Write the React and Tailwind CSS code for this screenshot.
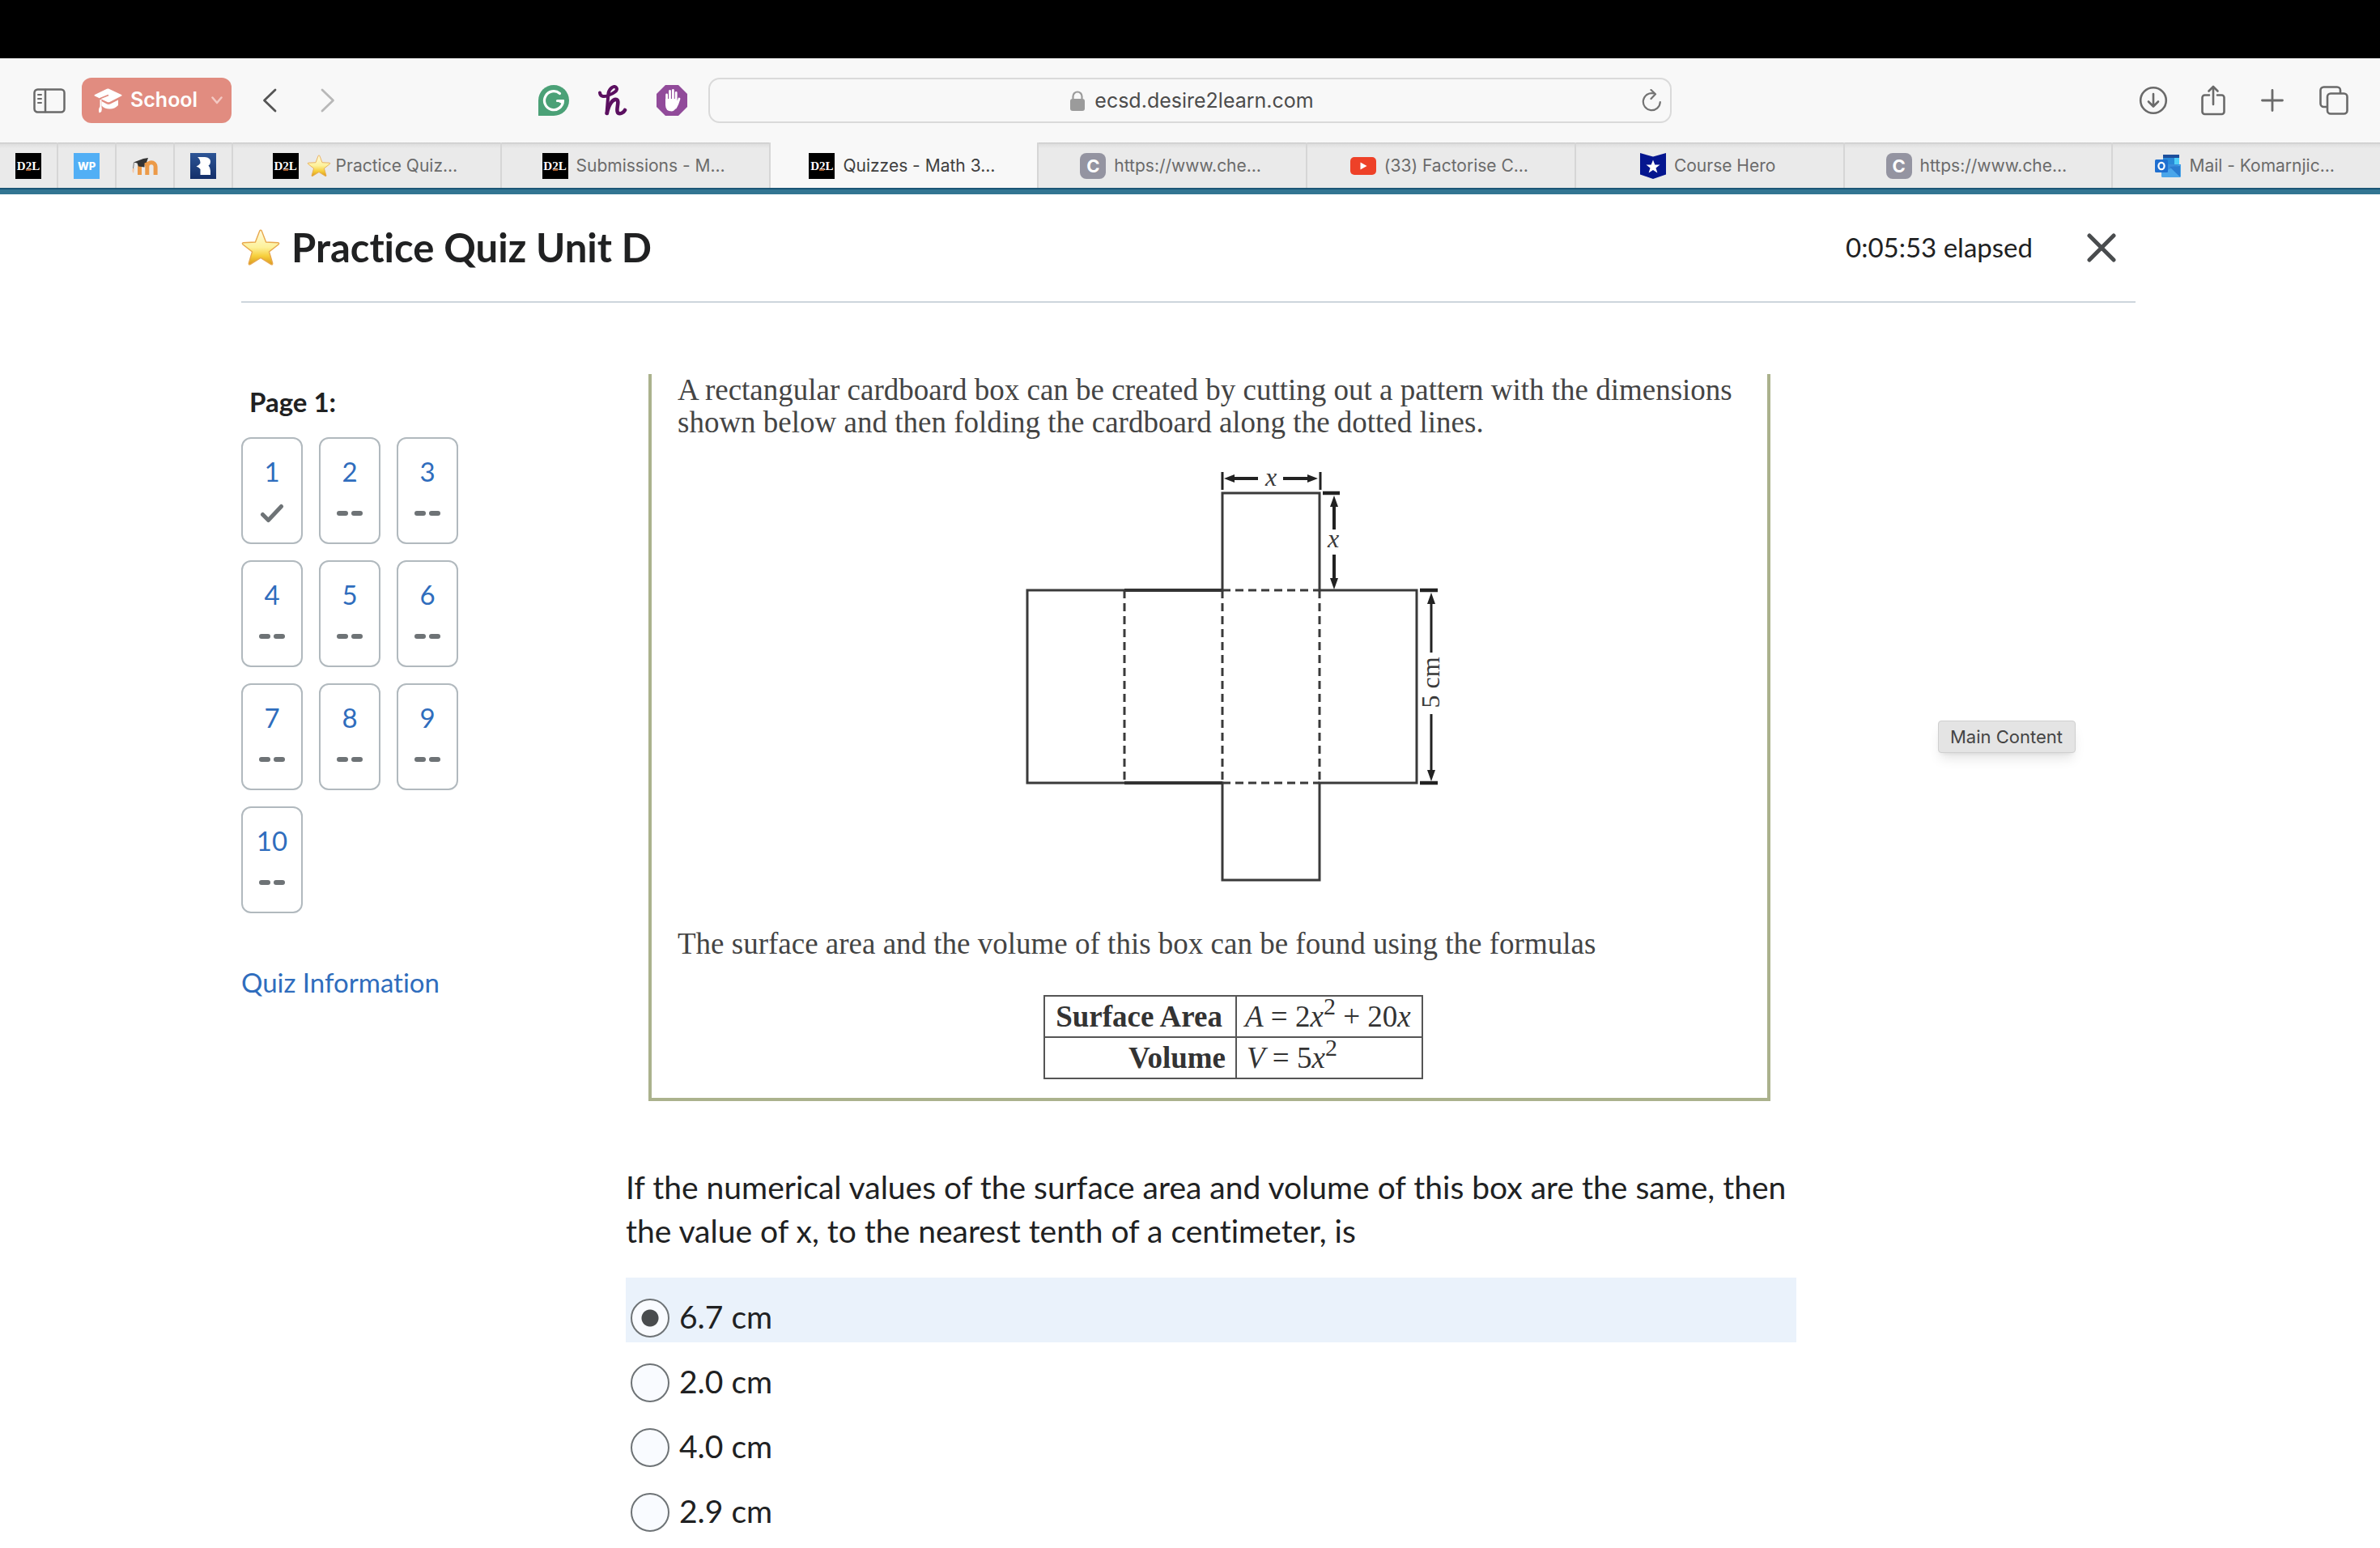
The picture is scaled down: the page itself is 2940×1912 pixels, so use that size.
import React, { useState } from "react";

/* ---------- icons ---------- */

function Star({ className }) {
  return (
    <svg viewBox="0 0 48 46" className={className} aria-hidden="true">
      <defs>
        <linearGradient id="starFill" x1="0" y1="0" x2="0" y2="1">
          <stop offset="0" stopColor="#fffbe0" />
          <stop offset="0.5" stopColor="#fdf19a" />
          <stop offset="0.75" stopColor="#f7cf3c" />
          <stop offset="1" stopColor="#d99a1c" />
        </linearGradient>
      </defs>
      <path
        d="M22.7 2.2q1.3-2 2.6 0L30.6 16l14.8.7q2 .3.8 2L34.500 28l4.200 14.200q.3 2.300-1.800 1.400L24 35.500 11.100 43.600q-2.100.9-1.800-1.400L13.500 28 1.800 18.700q-1.200-1.700.8-2L17.400 16Z"
        fill="url(#starFill)"
        stroke="#e8a84c"
        strokeWidth="1.4"
      />
    </svg>
  );
}

function SidebarIcon() {
  return (
    <svg viewBox="0 0 40 31" className="h-[31px] w-10" fill="none" stroke="#6a6a6a" strokeWidth="2.500" strokeLinecap="round">
      <rect x="1.500" y="1.500" width="37" height="28" rx="4" />
      <path d="M15 2v27" />
      <path d="M6 8h4M6 13h4M6 18h4" strokeWidth="2" />
    </svg>
  );
}

function CapIcon() {
  return (
    <svg viewBox="0 0 35 31" className="h-[31px] w-[35px]" aria-hidden="true">
      <path d="M18 0.500 34 8q1.200.8 0 1.600L19.500 17q-1.500.6-3 0L1 9.600Q0 8.800 1 8L16 .8q1-.5 2-.3Z" fill="#fff" />
      <path d="M9.500 16 16 19.500q2 .8 4 0L30 14.500V21q-5 5-11 4.500-6 0-9.500-4Z" fill="#fff" />
      <path d="M18 8.500 8 12.500V22" fill="none" stroke="#e18c80" strokeWidth="1.800" />
      <path d="M7.500 14v8.500q-2.500 4-.8 8l2.500-1.500q1-3.500.2-6.500V14Z" fill="#fff" />
    </svg>
  );
}

function GrammarlyIcon() {
  return (
    <svg viewBox="0 0 38 38" className="size-[38px]">
      <path d="M19 0a19 19 0 1 1 0 38H0V19A19 19 0 0 1 19 0Z" fill="#4ba177" />
      <path d="M26.500 10.500A11.500 11.500 0 1 0 30.500 19.500H23.500" fill="none" stroke="#fff" strokeWidth="3.200" strokeLinecap="round" strokeLinejoin="round" />
      <path d="M22 19.500l4-1.500h6l-3 5Z" fill="#fff" />
    </svg>
  );
}

function HoneyIcon() {
  return (
    <svg viewBox="0 0 36 38" className="h-[38px] w-9" fill="none" stroke="#5b1060" strokeLinecap="round" strokeLinejoin="round">
      <path d="M2 9.500C2.500 14.500 7 15 12 13 20 10 24.500 6.500 22.500 3.500 20 0 14 3.500 12.500 10L10.500 35" strokeWidth="4" />
      <path d="M10.800 35C13 24 18 17 22.500 18c4.500 1.500-1 12 1.500 16 2.500 3 7.500 0 9-3" strokeWidth="4.600" />
    </svg>
  );
}

function HandIcon() {
  return (
    <svg viewBox="0 0 38 38" className="size-[38px]">
      <path d="M11 0h16l11 11v16L27 38H11L0 27V11Z" fill="#914b9a" />
      <path d="M11 17h13.800v9q-2 6-6 6.500-7.800 0-7.800-8Z" fill="#fff" />
      <path
        d="M12.600 24V12M16.500 20V7.500M20.400 20V6.500M24.200 22V9.500M23.500 28Q26 24 28 17"
        fill="none"
        stroke="#fff"
        strokeWidth="2.800"
        strokeLinecap="round"
      />
    </svg>
  );
}

function LockIcon() {
  return (
    <svg viewBox="0 0 18 25" className="h-[25px] w-[18px]">
      <rect x="0" y="10" width="18" height="15" rx="3" fill="#9b9b9b" />
      <path d="M3.500 11V7a5.500 5.500 0 0 1 11 0v4" fill="none" stroke="#9b9b9b" strokeWidth="2.200" />
    </svg>
  );
}

function ReloadIcon() {
  return (
    <svg viewBox="0 0 25 28" className="h-7 w-[25px]" fill="none" stroke="#737373" strokeWidth="2.200" strokeLinecap="round" strokeLinejoin="round">
      <path d="M15 5.500A10.500 10.500 0 1 0 22.800 16" />
      <path d="M11.500 1 17 6.200 11.500 12" />
    </svg>
  );
}

function DownloadIcon() {
  return (
    <svg viewBox="0 0 36 36" className="size-9" fill="none" stroke="#6a6a6a" strokeWidth="2.600" strokeLinecap="round" strokeLinejoin="round">
      <circle cx="18" cy="18" r="15.800" />
      <path d="M18 10v15M12 19.500l6 6 6-6" />
    </svg>
  );
}

function ShareIcon() {
  return (
    <svg viewBox="0 0 30 38" className="h-[38px] w-[30px]" fill="none" stroke="#6a6a6a" strokeWidth="2.600" strokeLinecap="round" strokeLinejoin="round">
      <path d="M10 12.500H4.500a3 3 0 0 0-3 3V33a3 3 0 0 0 3 3h21a3 3 0 0 0 3-3V15.500a3 3 0 0 0-3-3H20" />
      <path d="M15 24V2M9.500 7.500 15 2l5.500 5.500" />
    </svg>
  );
}

function PlusIcon() {
  return (
    <svg viewBox="0 0 28 28" className="size-7" fill="none" stroke="#6a6a6a" strokeWidth="2.800" strokeLinecap="round">
      <path d="M14 1.500v25M1.500 14h25" />
    </svg>
  );
}

function TabsIcon() {
  return (
    <svg viewBox="0 0 36 36" className="size-9" fill="none" stroke="#6a6a6a" strokeWidth="2.600" strokeLinejoin="round">
      <rect x="10" y="9.500" width="24.500" height="25" rx="4" />
      <path d="M10 26H5.500a4 4 0 0 1-4-4V5.500a4 4 0 0 1 4-4H22a4 4 0 0 1 4 4v4" />
    </svg>
  );
}

function Chevron({ flip, color }) {
  return (
    <svg viewBox="0 0 18 30" className="h-[30px] w-[18px]" fill="none" stroke={color} strokeWidth="2.800" strokeLinecap="round" strokeLinejoin="round">
      <path d={flip ? "M2 2l13.500 13L2 28" : "M16 2 2.500 15 16 28"} />
    </svg>
  );
}

/* ---------- favicons ---------- */

function FavD2L() {
  return (
    <span className="relative flex size-8 shrink-0 items-center justify-center bg-black font-['Liberation_Serif',serif] text-[15px] leading-none font-bold text-white">
      D2L
      <span className="absolute bottom-[10px] left-[13px] h-[2px] w-[6px] bg-[#a65a2a]" />
    </span>
  );
}

function FavWP() {
  return (
    <span className="flex size-8 shrink-0 items-center justify-center bg-[#52aff5] font-[Inter,sans-serif] text-[13px] leading-none font-extrabold text-white">WP</span>
  );
}

function FavMoodle() {
  return (
    <svg viewBox="0 0 32 32" className="size-8 shrink-0">
      <path d="M9.500 27V17a4 4 0 0 1 9.300-1V27M18.800 27V17a5 5 0 0 1 10.300 0V27" fill="none" stroke="#ec9a48" strokeWidth="5" />
      <path d="M1 19q-1.500 4 1 6l1-6Z" fill="#f3c6a4" />
      <path d="M2 11.500 14 7l6-1-2 5.500-2.500 1v5l-7.500-1-1.500-4Z" fill="#333" />
      <path d="M2.500 11.500 1.500 19" stroke="#777" strokeWidth="1" />
    </svg>
  );
}

function FavR() {
  return (
    <svg viewBox="0 0 32 32" className="size-8 shrink-0">
      <defs>
        <linearGradient id="rFill" x1="0" y1="0" x2="0" y2="1">
          <stop offset="0" stopColor="#2d5596" />
          <stop offset="1" stopColor="#142f69" />
        </linearGradient>
      </defs>
      <rect width="32" height="32" fill="url(#rFill)" />
      <path d="M9 5h9q7 .5 7 6 0 3-2.500 4.500Q25 18 25 22v5H12.500v-7Q11 17.500 7.500 16.500 11 15 12.500 12.500q0-5-3.500-7.500Z" fill="#fff" />
    </svg>
  );
}

function FavC() {
  return (
    <span className="flex size-8 shrink-0 items-center justify-center rounded-lg bg-[#9494a1] font-[Inter,sans-serif] text-[22px] leading-none font-bold text-white">C</span>
  );
}

function FavYouTube() {
  return (
    <svg viewBox="0 0 32 32" className="size-8 shrink-0">
      <rect x="0" y="5" width="32" height="22" rx="5" fill="#ee4128" />
      <path d="M12.500 11.500v9l8-4.500Z" fill="#fff" />
    </svg>
  );
}

function FavHero() {
  return (
    <svg viewBox="0 0 32 32" className="size-8 shrink-0">
      <path d="M0 0 16 4.500 32 0v26.500L16 32 0 26.500Z" fill="#05168f" />
      <path d="M16 8.500l2.300 6h6.200l-5 3.900 1.900 6.200L16 21l-5.400 3.600 1.900-6.200-5-3.900h6.200Z" fill="#fff" />
    </svg>
  );
}

function FavOutlook() {
  return (
    <svg viewBox="0 0 32 32" className="size-8 shrink-0">
      <rect x="10" y="2" width="20" height="14" fill="#2a8ad8" />
      <rect x="10" y="2" width="20" height="4" fill="#1d4f9c" />
      <rect x="24" y="6" width="6" height="9" fill="#50d0f8" />
      <path d="M8 14h24v14a2 2 0 0 1-2 2H10a2 2 0 0 1-2-2Z" fill="#3b8fdc" />
      <path d="M8 24 32 14v14a2 2 0 0 1-2 2H10a2 2 0 0 1-2-2Z" fill="#4ba6ea" />
      <path d="M18 17l13 12.500V16Z" fill="#2b7cd0" />
      <rect x="0" y="8" width="16" height="16" rx="1.500" fill="#1f6fd0" />
      <ellipse cx="8" cy="16" rx="3.600" ry="4.200" fill="none" stroke="#fff" strokeWidth="2.200" />
    </svg>
  );
}

/* ---------- browser chrome ---------- */

const pinned = [
  { name: "D2L", Icon: FavD2L },
  { name: "WP", Icon: FavWP },
  { name: "Moodle", Icon: FavMoodle },
  { name: "R", Icon: FavR },
];

const tabs = [
  { title: "Practice Quiz…", Icon: FavD2L, star: true },
  { title: "Submissions - M…", Icon: FavD2L },
  { title: "Quizzes - Math 3…", Icon: FavD2L, active: true },
  { title: "https://www.che…", Icon: FavC },
  { title: "(33) Factorise C…", Icon: FavYouTube },
  { title: "Course Hero", Icon: FavHero },
  { title: "https://www.che…", Icon: FavC },
  { title: "Mail - Komarnjic…", Icon: FavOutlook },
];

function Toolbar() {
  const [url, setUrl] = useState("ecsd.desire2learn.com");
  return (
    <div className="grid h-[104px] grid-cols-[875px_1fr_875px] items-center bg-[#f8f8f8]">
      <div className="flex items-center">
        <button aria-label="Show sidebar" className="ml-[41px]">
          <SidebarIcon />
        </button>
        <button className="ml-5 flex h-14 w-[185px] items-center rounded-xl bg-[#e18c80] pl-[15px] font-[Inter,sans-serif] text-[25px] font-semibold text-white">
          <CapIcon />
          <span className="ml-2.5 flex-1 text-left">School</span>
          <svg viewBox="0 0 14 10" className="mr-[11px] h-[10px] w-[14px]" fill="none" stroke="#f3c9c3" strokeWidth="2.500" strokeLinecap="round" strokeLinejoin="round">
            <path d="M1.500 1.500 7 8l5.500-6.500" />
          </svg>
        </button>
        <button aria-label="Back" className="ml-[38px]">
          <Chevron color="#555" />
        </button>
        <button aria-label="Forward" className="ml-[54px]">
          <Chevron flip color="#b8b8b8" />
        </button>
        <button aria-label="Grammarly" className="ml-[251px]">
          <GrammarlyIcon />
        </button>
        <button aria-label="Honey" className="ml-9">
          <HoneyIcon />
        </button>
        <button aria-label="AdBlock" className="ml-9">
          <HandIcon />
        </button>
      </div>
      <div className="flex h-14 items-center rounded-[14px] border-2 border-[#dadada] pr-2.5 pl-10">
        <label className="flex flex-1 items-center justify-center gap-3">
          <LockIcon />
          <input
            aria-label="Address"
            value={url}
            onChange={(e) => setUrl(e.target.value)}
            className="field-sizing-content bg-transparent pt-0.5 font-[Inter,sans-serif] text-[25px] text-[#4c4c4c] outline-none"
          />
        </label>
        <button aria-label="Reload">
          <ReloadIcon />
        </button>
      </div>
      <div className="flex items-center justify-end pr-[39px]">
        <button aria-label="Downloads">
          <DownloadIcon />
        </button>
        <button aria-label="Share" className="ml-[41px]">
          <ShareIcon />
        </button>
        <button aria-label="New tab" className="ml-11">
          <PlusIcon />
        </button>
        <button aria-label="Tab overview" className="ml-11">
          <TabsIcon />
        </button>
      </div>
    </div>
  );
}

const idleTab = "bg-[#eaeaea] bg-[linear-gradient(#c4c4c4_0px,#dedede_2px,#eaeaea_7px)]";

function TabBar() {
  return (
    <div role="tablist" className="flex h-14 font-[Inter,sans-serif] text-[21px] text-[#6b6b6b]">
      {pinned.map(({ name, Icon }) => (
        <button key={name} role="tab" aria-selected="false" aria-label={name} className={`flex w-[72px] items-center justify-center border-r-2 border-[#d6d6d6] pt-0.5 ${idleTab}`}>
          <Icon />
        </button>
      ))}
      {tabs.map(({ title, Icon, star, active }, i) => (
        <button
          key={i}
          role="tab"
          aria-selected={active ? "true" : "false"}
          className={`flex flex-1 items-center justify-center border-r-2 border-[#d6d6d6] pt-0.5 pr-1 last:border-r-0 ${active ? "bg-[#f8f8f8] text-[#3f3f3f]" : idleTab}`}
        >
          <Icon />
          {star && <Star className="ml-2.5 h-7 w-[30px]" />}
          <span className={`whitespace-nowrap ${star ? "ml-1.5" : "ml-2.5"}`}>{title}</span>
        </button>
      ))}
    </div>
  );
}

/* ---------- quiz ---------- */

function Check() {
  return (
    <svg viewBox="0 0 30 24" className="h-6 w-[30px]" fill="none" stroke="#6e7376" strokeWidth="5" strokeLinecap="round" strokeLinejoin="round">
      <path d="M3.500 13.500 10.500 20.500 26.500 3.500" />
    </svg>
  );
}

function Dashes() {
  return (
    <span className="flex h-6 items-center gap-1">
      <span className="h-1.5 w-[14px] rounded-sm bg-[#6e7376]" />
      <span className="h-1.5 w-[14px] rounded-sm bg-[#6e7376]" />
    </span>
  );
}

function QuestionNav() {
  return (
    <nav aria-label="Quiz pages" className="w-[475px] shrink-0 text-[33px] leading-10">
      <h2 className="mt-3.5 pl-2.5 font-bold">Page 1:</h2>
      <div className="mt-6 grid w-fit grid-cols-[76px_76px_76px] gap-5">
        {Array.from({ length: 10 }, (_, i) => (
          <a key={i} href={`#q${i + 1}`} className="flex h-[132px] flex-col items-center gap-5 rounded-xl border-2 border-[#b1b9be] pt-5 text-[#2f6dbd]">
            {i + 1}
            {i === 0 ? <Check /> : <Dashes />}
          </a>
        ))}
      </div>
      <a href="#info" className="mt-[65px] inline-block text-[#2f6dbd]">
        Quiz Information
      </a>
    </nav>
  );
}

function NetDiagram() {
  return (
    <svg viewBox="1260 565 530 530" className="h-[530px] w-[530px]" role="img" aria-label="Net of the box" fill="none" stroke="#3a3a3a" strokeWidth="3">
      <path d="M1510 729V609H1630V729H1750V967H1630V1087H1510V967H1269V729Z" />
      <path d="M1389 729H1510M1389 967H1510" strokeWidth="4" stroke="#333" />
      <path d="M1389 729V967M1510 729V967M1630 729V967M1510 729H1630M1510 967H1630" strokeDasharray="10 6" />
      <path d="M1510 583V605M1631 583V605" stroke="#222" strokeWidth="3" />
      <path d="M1518 591H1554M1585 591H1622M1648 618V654M1648 685V722" stroke="#222" strokeWidth="4" />
      <path d="M1634 609H1655M1754 729H1776M1754 967H1776" stroke="#222" strokeWidth="4.500" />
      <path d="M1768 738V806M1768 882V958" stroke="#222" strokeWidth="3" />
      <g fill="#222" stroke="none">
        <path d="M1512 591l13-5v10ZM1628 591l-13-5v10ZM1648 612l-5 14h10ZM1648 728l-5-14h10ZM1768 732l-5 14h10ZM1768 965l-5-14h10Z" />
      </g>
      <g fill="#3a3a3a" stroke="none" textAnchor="middle" fontFamily="'Liberation Serif', serif" fontSize="32">
        <text x="1570" y="600" fontStyle="italic">x</text>
        <text x="1647" y="676" fontStyle="italic">x</text>
        <text transform="translate(1778 843) rotate(-90)">5 cm</text>
      </g>
    </svg>
  );
}

const cell = "border-2 border-[#555] p-0";

function Passage() {
  return (
    <figure className="mr-8 ml-7 border-4 border-t-0 border-[#abb28d] pl-8 font-['Liberation_Serif',serif] text-[37px] leading-10 text-[#444]">
      <p>
        A rectangular cardboard box can be created by cutting out a pattern with the dimensions
        <br />
        shown below and then folding the cardboard along the dotted lines.
      </p>
      <div className="mt-[23px] ml-[423px] flex">
        <NetDiagram />
      </div>
      <p className="mt-[51px]">The surface area and the volume of this box can be found using the formulas</p>
      <table className="mt-[43px] mb-[23px] ml-[452px] border-collapse text-[#333]">
        <tbody>
          <tr className="h-[51px]">
            <th className={`${cell} w-[237px] pr-4 text-right font-bold whitespace-nowrap`}>Surface Area</th>
            <td className={`${cell} w-[230px] pl-2.5 whitespace-nowrap`}>
              <i>A</i> = 2<i>x</i>
              <sup className="text-[30px]">2</sup> + 20<i>x</i>
            </td>
          </tr>
          <tr className="h-[51px]">
            <th className={`${cell} pr-3 text-right font-bold`}>Volume</th>
            <td className={`${cell} pl-3 whitespace-nowrap`}>
              <i>V</i> = 5<i>x</i>
              <sup className="text-[30px]">2</sup>
            </td>
          </tr>
        </tbody>
      </table>
    </figure>
  );
}

const answers = ["6.7 cm", "2.0 cm", "4.0 cm", "2.9 cm"];

function Question() {
  const [picked, setPicked] = useState("6.7 cm");
  return (
    <main className="min-w-0 flex-1">
      <Passage />
      <fieldset className="mt-[79px] text-[39px]">
        <legend className="leading-[54px]">
          If the numerical values of the surface area and volume of this box are the same, then
          <br />
          the value of x, to the nearest tenth of a centimeter, is
        </legend>
        <div className="mt-[31px]">
          {answers.map((a) => (
            <label key={a} className={`flex h-20 items-end gap-3 pb-1.5 pl-1.5 leading-[52px] ${picked === a ? "bg-[#eaf2fb]" : ""}`}>
              <input
                type="radio"
                name="answer"
                checked={picked === a}
                onChange={() => setPicked(a)}
                className="size-12 appearance-none rounded-full border-2 border-[#6e7376] bg-[#f9fbff] checked:bg-[radial-gradient(circle,#494c4e_10px,#f9fbff_11px)]"
              />
              {a}
            </label>
          ))}
        </div>
      </fieldset>
    </main>
  );
}

export default function App() {
  return (
    <div className="relative min-h-screen bg-white font-[Lato,sans-serif] text-[#202122] [font-variant-ligatures:none]">
      <div className="h-[72px] bg-black" />
      <Toolbar />
      <TabBar />
      <div className="h-2 border-t-2 border-[#1c5676] bg-[#327592]" />
      <div className="pr-[302px] pl-[298px]">
        <header className="flex h-[134px] items-center border-b-2 border-[#cdd5dc]">
          <Star className="h-[46px] w-12" />
          <h1 className="ml-3.5 flex-1 text-[49px] font-bold">Practice Quiz Unit D</h1>
          <span className="text-[33px]">0:05:53 elapsed</span>
          <button aria-label="Close" className="mr-6 ml-[67px]">
            <svg viewBox="0 0 36 36" className="size-9" stroke="#494c4e" strokeWidth="5" strokeLinecap="round">
              <path d="M3 3l30 30M33 3 3 33" />
            </svg>
          </button>
        </header>
        <div className="mt-[88px] flex pr-[419px]">
          <QuestionNav />
          <Question />
        </div>
      </div>
      <div role="tooltip" className="absolute top-[890px] left-[2394px] rounded-sm border border-[#cfcfcf] bg-[#e4e4e4] py-1 pr-[15px] pl-3.5 font-[Inter,sans-serif] text-[22px] leading-[30px] text-[#444] shadow-lg">
        Main Content
      </div>
    </div>
  );
}
